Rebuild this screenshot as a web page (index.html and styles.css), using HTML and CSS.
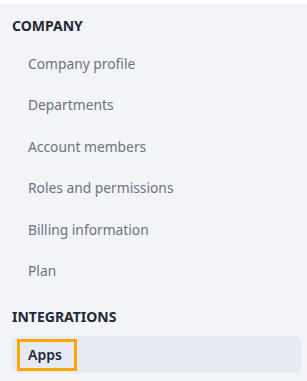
FILE: index.html
```html
<!DOCTYPE html>
<html>
<head>
<meta charset="utf-8">
<link rel="stylesheet" href="styles.css">
</head>
<body>
<nav class="sidebar">
  <h2 class="heading">COMPANY</h2>
  <ul class="list">
    <li class="item">Company profile</li>
    <li class="item">Departments</li>
    <li class="item">Account members</li>
    <li class="item">Roles and permissions</li>
    <li class="item">Billing information</li>
    <li class="item">Plan</li>
  </ul>
  <h2 class="heading heading-second">INTEGRATIONS</h2>
  <ul class="list">
    <li class="item item-active"><span class="mark">Apps</span></li>
  </ul>
</nav>
</body>
</html>
```

FILE: styles.css
```css
html, body {
  margin: 0;
  padding: 0;
  background: #ffffff;
}
body {
  font-family: "Noto Sans", "Open Sans", sans-serif;
  height: 381px;
  overflow: hidden;
}
.sidebar {
  margin-top: 4px;
  background: #f3f4f8;
  height: 377px;
  padding: 12px 5px 0 12px;
  box-sizing: border-box;
}
.heading {
  margin: 0 0 6px 0;
  font-size: 14px;
  line-height: 20px;
  font-weight: 700;
  color: #1f2937;
  letter-spacing: 0;
}
.heading-second {
  margin-top: 16px;
  margin-bottom: 9px;
}
.list {
  list-style: none;
  margin: 0;
  padding: 0;
}
.item {
  height: 41.5px;
  display: flex;
  align-items: center;
  padding-left: 16px;
  padding-top: 1px;
  box-sizing: border-box;
  font-size: 13.8px;
  color: #6b7280;
}
.item-active {
  height: 37px;
  padding-top: 0;
  background: #e6eaf2;
  border-radius: 8px;
  color: #1f2937;
  font-size: 14px;
  font-weight: 600;
  padding-left: 5px;
}
.mark {
  display: inline-flex;
  align-items: center;
  height: 26px;
  border: 3px solid #ffa500;
  padding: 0 12px 0 8px;
}
```
